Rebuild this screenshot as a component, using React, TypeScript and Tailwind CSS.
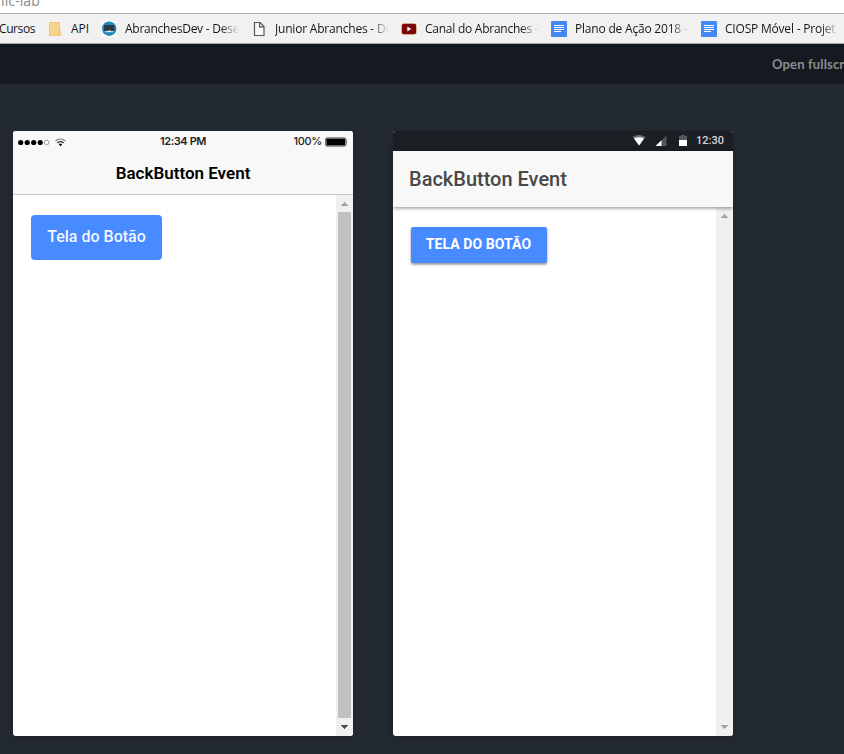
import React from "react";

const fade = "[mask-image:linear-gradient(to_right,black_84%,transparent_100%)]";

function FolderIcon() {
  return (
    <svg width="16" height="16" viewBox="0 0 16 16" className="shrink-0">
      <path d="M2.500 1.500h10v9h1v4h-11z" fill="#f5d48c" stroke="#eec679" />
      <path d="M11.500 14v-3.500h2" fill="none" stroke="#eec679" />
    </svg>
  );
}

function DevIcon() {
  return (
    <svg width="16" height="16" viewBox="0 0 16 16" className="shrink-0">
      <rect width="16" height="16" fill="#fafafa" />
      <circle cx="8.200" cy="7.700" r="7.200" fill="#1e87bd" />
      <rect x="3" y="4" width="10.500" height="6" rx="0.800" fill="#2f3a42" />
      <rect x="4" y="10" width="8.500" height="1.300" fill="#b5d3e2" />
      <rect x="6.500" y="9.600" width="3.500" height="1.400" fill="#e8eef2" />
    </svg>
  );
}

function PageIcon() {
  return (
    <svg width="16" height="16" viewBox="0 0 16 16" className="shrink-0" fill="#f8f8f8" stroke="#555" strokeWidth="1.200">
      <path d="M3.500 1.500h5.500l4 4v9H3.500z" />
      <path d="M8.600 1.500v4.300h4.400" fill="none" />
    </svg>
  );
}

function VideoIcon() {
  return (
    <svg width="16" height="16" viewBox="0 0 16 16" className="shrink-0">
      <rect x="0.200" y="2" width="15.600" height="12" rx="2.500" fill="#f7d9b5" />
      <rect x="0.800" y="2.800" width="14.400" height="10.400" rx="2" fill="#7c0505" />
      <path d="M6.300 5.600v4.800l4-2.400z" fill="#fff" />
    </svg>
  );
}

function DocsIcon() {
  return (
    <svg width="16" height="16" viewBox="0 0 16 16" className="shrink-0">
      <rect width="16" height="16" rx="0.800" fill="#4387f5" />
      <path d="M3 4.500h10M3 6.500h10M3 8.500h10M3 10.500h7" stroke="#fff" strokeWidth="1" />
    </svg>
  );
}

function Bookmark({ icon, label, spacing }: { icon: React.ReactNode; label: string; spacing: string }) {
  return (
    <div className="flex w-[150px] shrink-0 items-center gap-2">
      {icon}
      <span className={`w-[114px] overflow-hidden whitespace-nowrap ${spacing} ${fade}`}>{label}</span>
    </div>
  );
}

function BrowserBar() {
  return (
    <>
      <div className="h-[13px] overflow-hidden bg-white">
        <div className="-ml-1 -mt-[9px] font-['Open_Sans','Noto_Sans',sans-serif] text-[14px] leading-[20px] tracking-[0.1px] text-[#85888b]">nic-lab</div>
      </div>
      <div className="flex h-[31px] items-center overflow-hidden border-y border-[#a9a9a9] bg-[#f1f1f1] font-['Open_Sans','Noto_Sans',sans-serif] text-[12px] text-[#161616]">
        <span className="-ml-px w-12 shrink-0 tracking-[-0.4px]">Cursos</span>
        <div className="flex w-[54px] shrink-0 items-center gap-2">
          <FolderIcon />
          <span>API</span>
        </div>
        <Bookmark icon={<DevIcon />} label="AbranchesDev - Dese" spacing="tracking-[-0.25px]" />
        <Bookmark icon={<PageIcon />} label="Junior Abranches - De" spacing="tracking-[-0.2px]" />
        <Bookmark icon={<VideoIcon />} label="Canal do Abranches -" spacing="tracking-[-0.25px]" />
        <Bookmark icon={<DocsIcon />} label="Plano de Ação 2018 -" spacing="tracking-[-0.2px]" />
        <Bookmark icon={<DocsIcon />} label="CIOSP Móvel - Projet" spacing="tracking-[-0.2px]" />
      </div>
    </>
  );
}

function Scrollbar({ active }: { active: boolean }) {
  return (
    <div className="flex w-[17px] shrink-0 flex-col items-center justify-between bg-[#f0f0f0]">
      <svg width="17" height="17" viewBox="0 0 17 17" shapeRendering="crispEdges">
        <path d="M5 11h7v-1h-1V9h-1V8H9V7H8v1H7v1H6v1H5z" fill="#a3a3a3" />
      </svg>
      {active && <div className="-ml-px w-[13px] flex-1 bg-[#c1c1c1]" />}
      <svg width="17" height="18" viewBox="0 0 17 18" shapeRendering="crispEdges">
        <path d="M5 7h7v1h-1v1h-1v1H9v1H8v-1H7V9H6V8H5z" fill={active ? "#505050" : "#a3a3a3"} />
      </svg>
    </div>
  );
}

function IosPhone() {
  return (
    <section className="flex h-[605px] w-[340px] flex-col overflow-hidden rounded-[3px] bg-white shadow-[0_3px_12px_rgba(0,0,0,0.2)]">
      <header className="h-16 border-b border-[#c8c8c8] bg-[#f8f8f8]">
        <div className="grid h-[21px] grid-cols-3 items-center pl-[5px] pr-[5px] font-[Inter,sans-serif] text-[11px] font-medium text-[#222]">
          <svg width="50" height="12" viewBox="0 0 50 12">
            <g fill="#000">
              <circle cx="2.700" cy="6.500" r="2.600" />
              <circle cx="9.200" cy="6.500" r="2.600" />
              <circle cx="15.700" cy="6.500" r="2.600" />
              <circle cx="22.200" cy="6.500" r="2.600" />
            </g>
            <circle cx="28.700" cy="6.500" r="2.300" fill="none" stroke="#777" strokeWidth="0.700" />
            <g fill="none" stroke="#333" strokeWidth="1.200">
              <path d="M37.500 5q5-4 10 0" stroke="#777" />
              <path d="M39.300 7q3.200-2.600 6.400 0" />
            </g>
            <path d="M40.800 8.300q1.700-1.500 3.400 0l-1.700 2z" />
          </svg>
          <span className="whitespace-nowrap text-center font-semibold tracking-[-0.4px]">12:34 PM</span>
          <div className="flex items-center justify-end gap-[3px]">
            <span className="tracking-[-0.3px]">100%</span>
            <svg width="23" height="10" viewBox="0 0 23 10">
              <rect x="0.500" y="0.800" width="20.500" height="8.400" rx="1.500" fill="#aaa" stroke="#555" strokeWidth="0.800" />
              <rect x="1.500" y="1.700" width="18.500" height="6.600" rx="0.600" fill="#000" />
              <path d="M21.500 3.300q1.500 1.700 0 3.400z" fill="#222" />
            </svg>
          </div>
        </div>
        <h1 className="flex h-11 items-center justify-center font-[Roboto,sans-serif] text-[17px] font-semibold text-black">BackButton Event</h1>
      </header>
      <main className="flex flex-1">
        <div className="flex-1 pl-[18px] pt-5">
          <button className="h-[45px] w-[131px] rounded-[4px] bg-[#488aff] pb-0.5 font-[Roboto,sans-serif] text-[16px] font-medium text-white/95">Tela do Botão</button>
        </div>
        <Scrollbar active />
      </main>
    </section>
  );
}

function AndroidPhone() {
  return (
    <section className="flex h-[605px] w-[340px] flex-col overflow-hidden rounded-[3px] bg-white shadow-[0_3px_12px_rgba(0,0,0,0.2)]">
      <div className="flex h-5 shrink-0 items-center justify-end bg-[#1b1e22] pr-[9px]">
        <svg width="62" height="20" viewBox="0 0 62 20">
          <path d="M5.500 6q6.500-4 13 0L12.500 14.500z" fill="#6d7073" />
          <path d="M7 7.500q5-2.300 10 0l-5 7z" fill="#fff" />
          <path d="M28.500 15L39.500 4.500V15z" fill="#53565a" />
          <path d="M28.500 15l6-5.700V15z" fill="#fff" />
          <path d="M52 5h2V4h4v1h2v10h-8z" fill="#53565a" />
          <rect x="52" y="9" width="8" height="6" fill="#fff" />
        </svg>
        <span className="ml-[7px] pt-px font-[Roboto,sans-serif] text-[11px] font-medium text-[#d8d8d8]">12:30</span>
      </div>
      <header className="relative z-10 flex h-14 shrink-0 items-center bg-[#f8f8f8] pl-4 font-[Roboto,sans-serif] text-[20px] font-medium text-[#484848] shadow-[0_1px_4px_rgba(0,0,0,0.45)]">BackButton Event</header>
      <main className="flex flex-1">
        <div className="flex-1 pl-[18px] pt-5">
          <button className="h-9 w-[136px] rounded-[2px] bg-[#488aff] pb-0.5 pr-px font-[Roboto,sans-serif] text-[14px] font-bold tracking-[0.07px] text-white shadow-[0_2px_2px_rgba(0,0,0,0.2),0_1px_3px_rgba(0,0,0,0.3)]">TELA DO BOTÃO</button>
        </div>
        <Scrollbar active={false} />
      </main>
    </section>
  );
}

export default function App() {
  return (
    <div className="h-[754px] w-[844px] overflow-hidden bg-[#242a32]">
      <BrowserBar />
      <div className="flex h-10 items-center overflow-hidden bg-[#151a21] pl-[772px] pt-0.5">
        <span className="whitespace-nowrap font-[Lato,sans-serif] text-[13px] font-bold tracking-[0.15px] text-[#8b8d91]">Open fullscreen</span>
      </div>
      <div className="flex gap-10 pl-[13px] pt-[47px]">
        <IosPhone />
        <AndroidPhone />
      </div>
    </div>
  );
}
